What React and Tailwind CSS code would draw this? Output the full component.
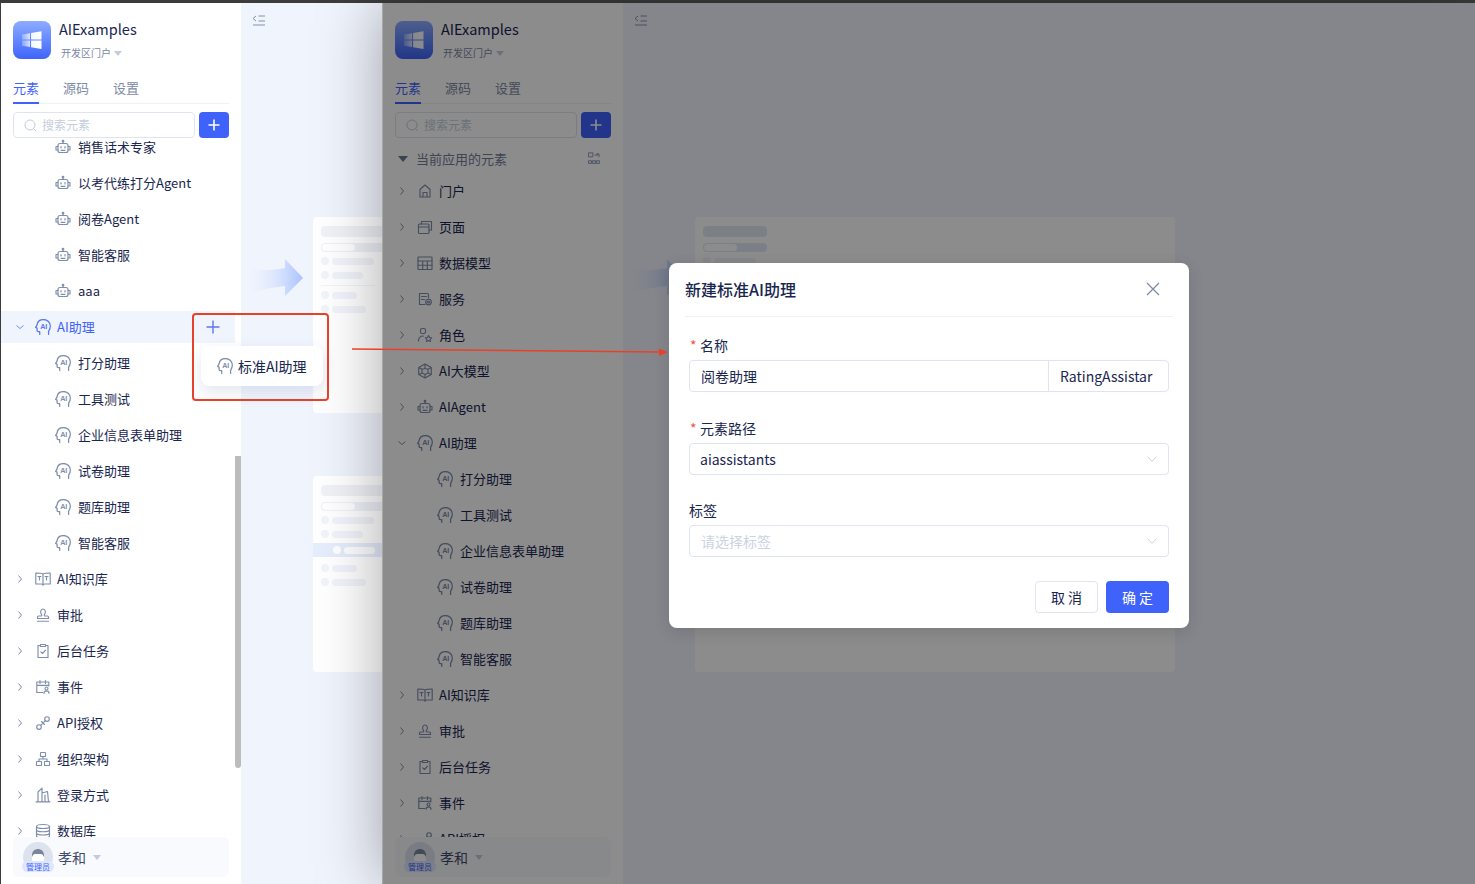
import React from "react";

const S = ({ children, size = 16, className = "text-[#7f8eab]", fill = "none", sw = 1.15, vb = "0 0 16 16" }) => (
  <svg width={size} height={size} viewBox={vb} fill={fill} stroke="currentColor" strokeWidth={sw} strokeLinecap="round" strokeLinejoin="round" className={`shrink-0 ${className}`}>
    {children}
  </svg>
);

const Robot = (p) => (
  <S {...p}>
    <rect x="3" y="4.500" width="10" height="9" rx="2" />
    <path d="M8 4.500V3M3 7.500H1v3.500h2M13 7.500h2v3.500h-2" />
    <circle cx="8" cy="2.200" r="0.800" />
    <path d="M6 7.500v1.500M10 7.500v1.500M6 11.300h4" />
  </S>
);
const AIHead = (p) => (
  <S vb="0.800 0.700 14.400 14.600" {...p}>
    <path d="M5 14.800v-2.600H3.600a1 1 0 0 1-1-1V9L1.300 8.300l1.300-2.200C2.900 3 5.200 1.200 8.600 1.200c3.500 0 6.100 2.600 6.100 6 0 2.400-.9 3.500-1.600 4.600v3" />
    <text x="8.700" y="9.900" fontSize="6.600" fontWeight="600" textAnchor="middle" fill="currentColor" stroke="none" fontFamily="'Liberation Sans',sans-serif">AI</text>
  </S>
);
const Book = (p) => (
  <S {...p}>
    <path d="M8 3.200C7 2 2.500 2 .8 2v11h5.400c.9 0 1.800.4 1.800 1.200 0-.8.9-1.200 1.800-1.200h5.400V2C13.500 2 9 2 8 3.200ZM8 3.200V14M3 5.500h3M10 5.500h3M4.500 5.500V9M11.500 5.500V9" />
  </S>
);
const Stamp = (p) => (
  <S {...p}>
    <path d="M6.500 7.500C5 6 5.300 2 8 2s3 4 1.500 5.500c-.5.6-.3 1.500.3 1.500h2.700a1 1 0 0 1 1 1v1.500h-11V10a1 1 0 0 1 1-1h2.700c.6 0 .8-.9.300-1.500ZM2.500 14.200h11" />
  </S>
);
const Clip = (p) => (
  <S {...p}>
    <path d="M5.500 2.500H3v12h10v-12h-2.500M5.500 1.500h5v2h-5zM5.800 8.800l1.700 1.700 3-3.300" />
  </S>
);
const Cal = (p) => (
  <S {...p}>
    <path d="M13.800 7V3H1.800v10.500h6M1.800 6.300h12M5 1.500v3M10.500 1.500v3" />
    <circle cx="11.500" cy="9.500" r="1.500" />
    <path d="M9 14.300c0-1.500 1.200-2.500 2.500-2.500s2.500 1 2.500 2.500" />
  </S>
);
const Link2 = (p) => (
  <S {...p}>
    <circle cx="4" cy="12" r="2.300" />
    <circle cx="12" cy="4" r="2.300" />
    <path d="M5.700 10.300l1.500-1.500M8.800 7.200l1.500-1.500M6.500 6.500l3 3" />
  </S>
);
const Org = (p) => (
  <S {...p}>
    <rect x="5.500" y="1.500" width="5" height="4" rx=".6" />
    <rect x="1.500" y="10.500" width="5" height="4" rx=".6" />
    <rect x="9.500" y="10.500" width="5" height="4" rx=".6" />
    <path d="M8 5.500V8M4 10.500V8h8v2.500" />
  </S>
);
const Build = (p) => (
  <S {...p}>
    <path d="M1 14.800h14M3 14.800V5l4-3.800v13.600M7 6l5.500-1.500 1 10.300M10 14.800V8" />
  </S>
);
const DB = (p) => (
  <S {...p}>
    <ellipse cx="8" cy="3.500" rx="6.500" ry="2" />
    <path d="M1.500 3.500v9.500c0 1.100 2.900 2 6.500 2s6.500-.9 6.500-2V3.500M1.500 6.700c0 1.100 2.900 2 6.500 2s6.500-.9 6.500-2M1.500 10c0 1.100 2.900 2 6.500 2s6.500-.9 6.500-2" />
  </S>
);
const Home = (p) => (
  <S {...p}>
    <path d="M3 6.500L8 2l5 4.500v7.500H3zM6 14V9.500h4V14" />
  </S>
);
const Pages = (p) => (
  <S {...p}>
    <rect x="1.500" y="5" width="10.500" height="9.500" rx="1" />
    <path d="M1.500 8h10.500M4.500 5V2.500h10v8.500H12" />
  </S>
);
const Table = (p) => (
  <S {...p}>
    <rect x="1" y="2" width="14" height="12.500" rx=".6" />
    <path d="M1 6h14M1 10.200h14M5.700 6v8.500M10.300 6v8.500" />
  </S>
);
const Service = (p) => (
  <S {...p}>
    <path d="M8 13.500H2.500v-11h8a1 1 0 0 1 1 1V7M4.500 5.500h5M4.500 8.500h3" />
    <circle cx="11.500" cy="11" r="2.800" />
    <circle cx="11.500" cy="11" r="1" />
  </S>
);
const Role = (p) => (
  <S {...p}>
    <rect x="3.500" y="1.500" width="5" height="5" rx="1.500" />
    <path d="M1.500 14c0-3 1.800-5 5-5M11.500 8.500l1 2 2.200.3-1.600 1.500.4 2.200-2-1-2 1 .4-2.200-1.600-1.500 2.200-.3z" />
  </S>
);
const Cube = (p) => (
  <S {...p}>
    <path d="M8 1l6.300 3.500v7L8 15l-6.300-3.500v-7zM8 1v4.500M1.700 4.500L5 6.300M14.300 4.500L11 6.300M5 6.300l3-.8 3 .8v3.700L8 11.500 5 10zM8 11.500V15M5 10l-3.300 1.500M11 10l3.300 1.500" />
  </S>
);
const Mini = () => (
  <S size={14} sw={1} className="text-[#7f8eab]">
    <rect x="1" y="1" width="4.500" height="4.500" />
    <path d="M8 3.500h2.500V1.500M10.500 3.500L12.500 2v3.500" />
    <rect x="1" y="10" width="3" height="3" />
    <rect x="5.500" y="10" width="3" height="3" />
    <rect x="10" y="10" width="3" height="3" />
  </S>
);
const Chev = ({ open, className = "text-[#7f8eab]" }) => (
  <svg width="14" height="14" viewBox="0 0 14 14" fill="none" stroke="currentColor" strokeWidth="1" className={`shrink-0 ${className}`}>
    {open ? <path d="M3.500 5.500L7 8.500l3.500-3" /> : <path d="M5.500 3.500L8.500 7l-3 3.500" />}
  </svg>
);
const Caret = ({ className = "text-[#c3cbda]" }) => (
  <svg width="8" height="5" viewBox="0 0 8 5" className={`shrink-0 ${className}`} fill="currentColor"><path d="M0 0h8L4 5z" /></svg>
);
const DownLine = () => (
  <svg width="12" height="12" viewBox="0 0 12 12" fill="none" stroke="#ccd3e2" strokeWidth="1" className="shrink-0"><path d="M1.500 3.500L6 8.500l4.500-5" /></svg>
);

const Top = ({ icon: I, label, open, active }) => (
  <div className="h-9 flex items-center">
    <div className={`h-8 w-full flex items-center pl-[12px] ${active ? "bg-[#f0f4fd]" : ""}`}>
      <Chev open={open} className={active ? "text-[#6f8cf5]" : "text-[#7f8eab]"} />
      <span className="ml-[8px]"><I className={active ? "text-[#5a78f0]" : "text-[#7f8eab]"} /></span>
      <span className={`ml-[6px] text-[13px] leading-5 whitespace-nowrap ${active ? "text-[#3f62fb]" : "text-[#19264f]"}`}>{label}</span>
    </div>
  </div>
);
const Child = ({ icon: I = AIHead, label }) => (
  <div className="h-9 flex items-center pl-[54px]">
    <I />
    <span className="ml-[7px] text-[13px] leading-5 whitespace-nowrap text-[#19264f]">{label}</span>
  </div>
);

const assistants = ["打分助理", "工具测试", "企业信息表单助理", "试卷助理", "题库助理", "智能客服"];
const tail = [
  [Book, "AI知识库"],
  [Stamp, "审批"],
  [Clip, "后台任务"],
  [Cal, "事件"],
  [Link2, "API授权"],
  [Org, "组织架构"],
  [Build, "登录方式"],
  [DB, "数据库"],
];

const Footer = () => (
  <div className="mx-3 mb-[7px] h-10 shrink-0 rounded-md bg-[#f8fafd] flex items-center pl-[10px]">
    <div className="relative w-[30px] h-[30px] rounded-full bg-[#dde3ee] flex items-start justify-center">
      <svg width="18" height="20" viewBox="0 0 18 20" className="mt-[5px]">
        <path d="M3 8c0-4 3-6 6-6s6 2 6 6v8H3z" fill="#ffffff" />
        <path d="M3 10V8c0-4 3-6 6-6s6 2 6 6v2c-1-2-1.500-3-3-3H6c-1.500 0-2 1-3 3z" fill="#7b869c" />
      </svg>
      <span className="absolute left-[-1px] bottom-0 w-8 h-[11px] rounded-full bg-[#dfe7ff] text-[#3f62fb] text-[8px] leading-[11px] text-center whitespace-nowrap">管理员</span>
    </div>
    <span className="ml-[5px] text-sm leading-5 text-[#3e4a68]">孝和</span>
    <span className="ml-[7px]"><Caret /></span>
  </div>
);

const Sidebar = ({ children }) => (
  <aside className="w-[240px] shrink-0 h-full bg-white flex flex-col">
    <div className="px-3 pt-[18px] shrink-0">
      <div className="flex items-start h-[38px]">
        <div className="w-[38px] h-[38px] rounded-lg bg-gradient-to-b from-[#8fabff] to-[#3f62fb] flex items-center justify-center">
          <svg width="38" height="38" viewBox="0 0 38 38">
            <defs>
              <linearGradient id="winfade" x1="0" x2="1" y1="0" y2="0">
                <stop offset="0" stopColor="#fff" stopOpacity="0.25" />
                <stop offset="0.55" stopColor="#fff" stopOpacity="0.95" />
                <stop offset="1" stopColor="#fff" />
              </linearGradient>
            </defs>
            <path fill="url(#winfade)" d="M9 13.500l8-1.300V18.500H9zM18 12l10.500-1.800V18.500H18zM9 19.500h8V26l-8-1.200zM18 19.500h10.500V28L18 26.200z" />
          </svg>
        </div>
        <div className="ml-2 -mt-px">
          <div className="text-[14.500px] leading-[18px] text-[#19264f]">AIExamples</div>
          <div className="mt-[8px] ml-[2px] flex items-center gap-[3px] text-[10px] leading-[14px] text-[#7a87a3]">
            开发区门户 <Caret />
          </div>
        </div>
      </div>
      <div className="mt-[19px] h-[26px] flex gap-6 border-b border-[#eef1f6] text-[13px] leading-5">
        <div className="h-[26px] border-b-2 border-[#3f62fb] text-[#3f62fb]">元素</div>
        <div className="text-[#7d8aa6]">源码</div>
        <div className="text-[#7d8aa6]">设置</div>
      </div>
      <div className="mt-2 flex gap-1 h-[26px]">
        <div className="flex-1 rounded border border-[#dfe4f0] flex items-center pl-[10px]">
          <svg width="13" height="13" viewBox="0 0 13 13" fill="none" stroke="#c4ccdb" strokeWidth="1"><circle cx="6" cy="6" r="5" /><path d="M9.500 9.500l2.500 2.500" /></svg>
          <span className="ml-[5px] text-xs text-[#c6cedd]">搜索元素</span>
        </div>
        <div className="w-[30px] rounded bg-[#3f62fb] flex items-center justify-center">
          <svg width="14" height="14" viewBox="0 0 14 14" stroke="#fff" strokeWidth="1.600"><path d="M7 1.500v11M1.500 7h11" /></svg>
        </div>
      </div>
    </div>
    <div className="flex-1 min-h-0 overflow-hidden">{children}</div>
    <Footer />
  </aside>
);

const Bar = ({ w }) => <div className={`${w} h-[7px] rounded-sm bg-[#f1f4fa]`} />;
const Item = ({ w }) => (
  <div className="flex items-center gap-[3px] h-[14px]">
    <div className="w-2 h-2 rounded-full bg-[#f1f4fa]" />
    <Bar w={w} />
  </div>
);
const Mock = ({ band, blue }) => (
  <div className="w-[480px] h-[196px] rounded bg-white pt-[9px]">
    <div className={`ml-2 w-16 h-[11px] rounded-sm ${blue ? "bg-[#e1eaf6]" : "bg-[#f0f2f8]"}`} />
    <div className={`ml-2 mt-[6px] w-16 h-[9px] rounded-sm p-px ${blue ? "bg-[#e1eaf6]" : "bg-[#eef1f8]"}`}>
      <div className="w-[33px] h-[7px] bg-white rounded-sm" />
    </div>
    <div className="ml-2 mt-[2px] w-[64px]">
      <Item w="w-[42px]" />
      <Item w="w-[31px]" />
    </div>
    {band ? (
      <div className="mt-[2px] h-[14px] w-full bg-[#e6edfc] flex items-center pl-5 gap-[3px]">
        <div className="w-2 h-2 rounded-full bg-white" />
        <div className="w-[31px] h-[7px] rounded-sm bg-white" />
      </div>
    ) : (
      <div className="ml-2 mt-[3px] h-px w-[54px] bg-[#f1f4fa]" />
    )}
    <div className={`ml-2 ${band ? "mt-[4px]" : "mt-[2px]"} w-[64px]`}>
      <Item w="w-[25px]" />
      <Item w="w-[34px]" />
    </div>
  </div>
);

const Content = ({ className, blue }) => (
  <div className={`${className} h-full bg-[#f0f4fd] overflow-hidden`}>
    <div className="pt-3 pl-[11px]">
      <svg width="14" height="11" viewBox="0 0 14 11" fill="none" stroke="#8492ad" strokeWidth="1" className="block">
        <path d="M4 1L1 3.500 4 6M6.500 1H13M6.500 6H13M1 10h12" />
      </svg>
    </div>
    <div className="ml-[9px] flex gap-[10px] mt-[204px]">
      <svg width="53" height="38" viewBox="0 0 53 38" className="shrink-0 mt-[29px]">
        <defs>
          <linearGradient id="arrowg" x1="0" x2="1" y1="0" y2="0">
            <stop offset="0" stopColor="#dde7ff" stopOpacity="0" />
            <stop offset="1" stopColor="#a8c1ff" />
          </linearGradient>
        </defs>
        <path fill="url(#arrowg)" d="M0 9c14 3 26 2 35 0V0l18 19-18 18V27C24 28 10 31 0 34z" />
      </svg>
      <div className="shrink-0 flex flex-col gap-[63px] -mt-[13px]">
        <Mock blue={blue} />
        <Mock band blue={blue} />
      </div>
    </div>
  </div>
);

export default function App() {
  return (
    <div className="relative w-[1475px] h-[884px] overflow-hidden bg-[#3c3c3c] pt-[3px] font-['Noto_Sans_CJK_SC','Noto_Sans',sans-serif]">
      <div className="h-full flex">
        <div className="w-px shrink-0 bg-[#3c3c3c]" />
        <Sidebar>
          <div className="-mt-[9px] pr-[6px]">
            <Child icon={Robot} label="销售话术专家" />
            <Child icon={Robot} label="以考代练打分Agent" />
            <Child icon={Robot} label="阅卷Agent" />
            <Child icon={Robot} label="智能客服" />
            <Child icon={Robot} label="aaa" />
            <div className="relative">
              <Top icon={AIHead} label="AI助理" open active />
              <svg width="14" height="14" viewBox="0 0 14 14" stroke="#5a78f0" strokeWidth="1.400" className="absolute left-[205px] top-[11px]"><path d="M7 .5v13M.5 7h13" /></svg>
            </div>
            {assistants.map((a) => <Child key={a} label={a} />)}
            {tail.map(([I, l]) => <Top key={l} icon={I} label={l} />)}
          </div>
        </Sidebar>
        <Content className="w-[141px] shrink-0" />
        <div className="relative flex-1 min-w-0 h-full flex border-l border-[#a8a8a8] shadow-[0_0_60px_rgba(0,0,0,0.35)]">
          <Sidebar>
            <div className="mt-[6px] h-[29px] flex items-center pl-[15px] pr-[21px]">
              <svg width="10" height="6" viewBox="0 0 10 6" className="shrink-0 text-[#6c7a98]" fill="currentColor"><path d="M0 0h10L5 6z" /></svg>
              <span className="ml-2 flex-1 text-[13px] leading-5 text-[#6f7c99]">当前应用的元素</span>
              <Mini />
            </div>
            <Top icon={Home} label="门户" />
            <Top icon={Pages} label="页面" />
            <Top icon={Table} label="数据模型" />
            <Top icon={Service} label="服务" />
            <Top icon={Role} label="角色" />
            <Top icon={Cube} label="AI大模型" />
            <Top icon={Robot} label="AIAgent" />
            <Top icon={AIHead} label="AI助理" open />
            {assistants.map((a) => <Child key={a} label={a} />)}
            {tail.slice(0, 5).map(([I, l]) => <Top key={l} icon={I} label={l} />)}
          </Sidebar>
          <Content className="flex-1 min-w-0" blue />
          <div className="absolute inset-0 bg-black/45" />
        </div>
      </div>

      <div className="absolute left-[235px] top-[456px] w-[6px] h-[312px] rounded-b bg-[#bcbcbc]" />

      <div className="absolute left-[201px] top-[346px] w-[122px] h-10 rounded-lg bg-white shadow-[0_6px_16px_rgba(60,80,130,0.14)] flex items-center pl-4 gap-[5px]">
        <AIHead />
        <span className="text-sm leading-5 text-[#19264f] whitespace-nowrap">标准AI助理</span>
      </div>
      <div className="absolute left-[192px] top-[313px] w-[137px] h-[88px] border-2 border-[#e8412a] rounded-[4px]" />

      <div className="absolute left-[669px] top-[263px] w-[520px] h-[365px] rounded-lg bg-white shadow-[0_4px_16px_rgba(0,0,0,0.12)] px-4 text-[#19264f]">
        <div className="h-[54px] border-b border-[#eef1f6] flex items-center justify-between">
          <span className="text-base font-medium leading-6 -mt-[2px]">新建标准AI助理</span>
          <svg width="14" height="14" viewBox="0 0 14 14" stroke="#7e8aa6" strokeWidth="1.300" className="mr-[13px] -mt-[2px]"><path d="M1 1l12 12M13 1L1 13" /></svg>
        </div>
        <div className="px-1">
          <div className="mt-[18px] h-5 flex items-center text-sm leading-5">
            <span className="w-[11px] pl-px text-[#f0533f] text-sm">*</span>名称
          </div>
          <div className="mt-[5px] h-8 rounded border border-[#dfe4f0] flex text-sm">
            <div className="flex-1 flex items-center pl-[11px]">阅卷助理</div>
            <div className="w-[120px] border-l border-[#dfe4f0] pl-[11px] flex items-center whitespace-nowrap">RatingAssistar</div>
          </div>
          <div className="mt-[26px] h-5 flex items-center text-sm leading-5">
            <span className="w-[11px] pl-px text-[#f0533f] text-sm">*</span>元素路径
          </div>
          <div className="mt-[5px] h-8 rounded border border-[#dfe4f0] flex items-center justify-between pl-[10px] pr-[10px] text-sm">
            aiassistants <DownLine />
          </div>
          <div className="mt-[25px] h-5 flex items-center text-sm leading-5">标签</div>
          <div className="mt-[5px] h-8 rounded border border-[#dfe4f0] flex items-center justify-between pl-[11px] pr-[10px] text-sm text-[#ccd3e2]">
            请选择标签 <DownLine />
          </div>
          <div className="mt-6 flex justify-end gap-2">
            <div className="w-[63px] h-8 pl-[3px] rounded border border-[#dfe4f0] flex items-center justify-center text-sm tracking-[3px]">取消</div>
            <div className="w-[63px] h-8 pl-[3px] rounded bg-[#3f62fb] text-white flex items-center justify-center text-sm tracking-[3px]">确定</div>
          </div>
        </div>
      </div>

      <svg width="1475" height="884" viewBox="0 0 1475 884" className="absolute left-0 top-0 pointer-events-none">
        <path d="M352 349L660 352" stroke="#e8412a" strokeWidth="1.500" fill="none" />
        <path d="M668 352.200L659 348.500V356z" fill="#e8412a" />
      </svg>
    </div>
  );
}
